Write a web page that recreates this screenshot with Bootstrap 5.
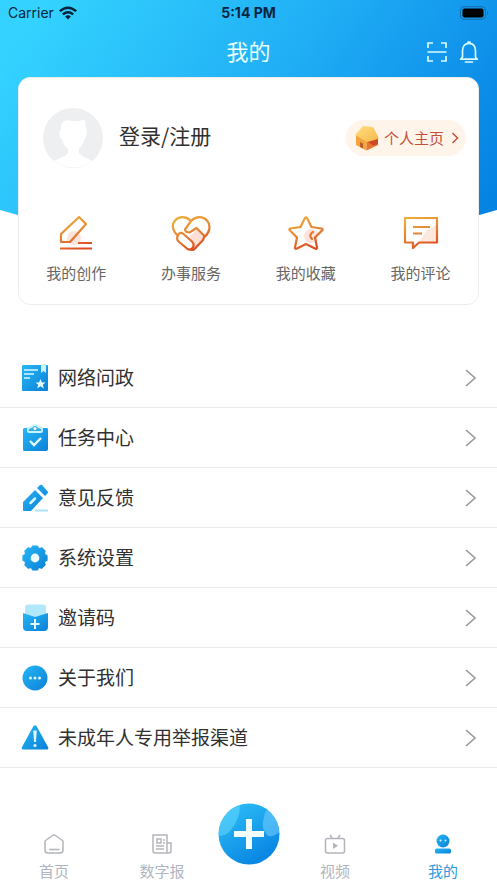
<!DOCTYPE html>
<html lang="zh-CN">
<head>
<meta charset="utf-8">
<meta name="viewport" content="width=device-width, initial-scale=1">
<title>我的</title>
<link href="https://cdn.jsdelivr.net/npm/bootstrap@5.3.0/dist/css/bootstrap.min.css" rel="stylesheet">
<style>
body{font-family:"Noto Sans CJK SC","Liberation Sans",sans-serif;background:#fff;color:#303030}
svg{display:block;flex:none}
.app{min-height:100vh}
.top-area{position:relative;isolation:isolate}
.top-area::before{content:"";position:absolute;z-index:-1;top:0;left:0;right:0;height:280px;
  background:linear-gradient(125deg,#34d3ff 6%,#20aef5 48%,#0a8ae7 82%,#007de0);
  clip-path:polygon(0 0,100% 0,100% 75%,50% 100%,0 75%)}
.status{height:26px;font:14px/26px Inter,sans-serif;color:#0a2540}
.status-side{flex:1 1 0}
.status strong{font-weight:700}
.title-row{height:51px;color:#eaffff}
.title-row h1{font-size:22px;line-height:46px;font-weight:400}
.title-side{flex:1 1 0}
.profile{margin:0 18px;height:228px;border:1px solid #ededef;border-radius:12px}
.who{height:120px;padding-right:12px}
.login{color:#303030;font-size:21px}
.home-pill{height:36px;background:#fff4ea;color:#c4523a;font-size:15px}
.shortcut{font-size:15px;line-height:22px;color:#666}
.menu{margin-top:43px}
.menu .list-group-item{height:60px;border-color:#ebebeb;border-width:0 0 1px;color:#303030;font-size:19px}
.menu.list-group-flush > .list-group-item:last-child{border-bottom-width:1px}
.tabs{color:#b0b5c0;font-size:15px;line-height:20px;padding-bottom:2px}
.tabs a{color:inherit;flex:1 1 0;gap:6px}
.tabs a.on{color:#2b9bdd}
.tabs .add{flex:0 0 65px;margin-bottom:16px}
</style>
<script src="https://cdn.jsdelivr.net/npm/bootstrap@5.3.0/dist/js/bootstrap.bundle.min.js"></script>
</head>
<body>
<svg width="0" height="0" class="position-absolute" aria-hidden="true">
  <defs>
    <linearGradient id="warm" gradientUnits="userSpaceOnUse" x1="8" y1="0" x2="22" y2="36"><stop stop-color="#f0b238"/><stop offset=".5" stop-color="#e68a35"/><stop offset="1" stop-color="#dc4d22"/></linearGradient>
    <linearGradient id="cool" x1="0" y1="0" x2="1" y2="1"><stop stop-color="#27b7f6"/><stop offset="1" stop-color="#0b80d6"/></linearGradient>
    <linearGradient id="ball" x1=".2" y1="0" x2=".8" y2="1"><stop stop-color="#2cbdf7"/><stop offset="1" stop-color="#0580e0"/></linearGradient>
    <linearGradient id="roof" x1="0" y1="0" x2="1" y2="1"><stop stop-color="#ffe07e"/><stop offset="1" stop-color="#f7b64a"/></linearGradient>
  </defs>
</svg>
<div class="app d-flex flex-column">
  <header class="top-area">
    <div class="status d-flex align-items-center px-2">
      <div class="status-side d-flex align-items-center gap-1">
        <span>Carrier</span>
        <svg width="20" height="14" viewBox="0 0 20 14" fill="none" stroke="#06223a" stroke-width="2.4"><path d="M1.8 5.2Q10-1.8 18.200 5.200M4.800 8.300Q10 4 15.200 8.300"/><path d="M7.200 10.500Q10 8.200 12.800 10.500L10 13.500Z" fill="#06223a" stroke="none"/></svg>
      </div>
      <strong>5:14 PM</strong>
      <div class="status-side d-flex justify-content-end">
        <svg width="30" height="14" viewBox="0 0 30 14"><rect x="1.500" y=".7" width="25" height="12.600" rx="3.500" fill="none" stroke="#176da8"/><rect x="3.500" y="2.600" width="21" height="8.800" rx="2" fill="#000"/><path d="M28 4.700q2 2.300 0 4.600z" fill="#176da8"/></svg>
      </div>
    </div>
    <div class="title-row d-flex align-items-center px-3">
      <div class="title-side"></div>
      <h1 class="m-0 pb-1">我的</h1>
      <div class="title-side d-flex justify-content-end gap-2">
        <button type="button" class="btn p-0 border-0" aria-label="扫一扫"><svg width="24" height="24" viewBox="0 0 24 24" fill="none" stroke="#d8fbff" stroke-width="1.700"><path d="M3 8V3H8M16 3H21V8M3 16V21H8M16 21H21V16M2.500 12H21.500"/></svg></button>
        <button type="button" class="btn p-0 border-0" aria-label="消息"><svg width="24" height="24" viewBox="0 0 24 24" fill="none" stroke="#d8fbff" stroke-width="1.700" stroke-linejoin="round" stroke-linecap="round"><path d="M5.500 17V11C5.500 6 8 3.300 12 3.300S18.500 6 18.500 11V17L20.300 19.200H3.700ZM11 3.200V2.200H13V3.200M8.500 22H15.500"/></svg></button>
      </div>
    </div>
    <section class="profile bg-white">
      <div class="who d-flex align-items-center">
        <svg class="ms-4" width="60" height="60" viewBox="0 0 60 60"><circle cx="30" cy="30" r="30" fill="#eeeff0"/><path d="M18 20C18 14 22 11.500 27 12.500Q35 14 42 11.500L43 21Q44 22 43.500 27Q43 29 42 31Q39 38 36 41V45Q38 48 43 50Q47 51.500 49 53Q41 59.500 30 59.500T11 53Q14 51 18 49.500Q25 47 25 44V41Q21 38 19 31Q16.500 31 16.500 26Q16.500 22 18 22Z" fill="#fff"/></svg>
        <a href="#" class="login text-decoration-none ms-3 pb-1">登录/注册</a>
        <a href="#" class="home-pill d-flex align-items-center rounded-pill text-decoration-none ms-auto pe-1">
          <svg class="ms-2" width="26" height="26" viewBox="0 0 26 26"><path d="M2 9.500L13 16L12.500 25.500L2 20Z" fill="#f3a43f"/><path d="M13 16L24 13.500V20L12.500 25.500Z" fill="#e67530"/><path d="M14 17L24 14V19L19 20.500Z" fill="#cc4822"/><path d="M9 1L18 2Q19.500 2 20 3.500L25 13.500L13 17L1 10Z" fill="url(#roof)"/><path d="M6 17L9 18.500V23.500L6 22Z" fill="#b96028"/></svg>
          <span class="ms-1">个人主页</span>
          <svg class="ms-1" width="14" height="14" viewBox="0 0 14 14" fill="none" stroke="#c4523a" stroke-width="1.500"><path d="M4.500 2L9.500 7L4.500 12"/></svg>
        </a>
      </div>
      <nav class="row g-0 text-center pt-3">
        <a href="#" class="col shortcut text-decoration-none d-flex flex-column align-items-center gap-2">
          <svg width="40" height="40" viewBox="0 0 40 40" fill="none" stroke="url(#warm)" stroke-width="2.200" stroke-linejoin="round"><circle cx="18" cy="24" r="7" fill="#fde3d9" stroke="none"/><path d="M5 20L23 3L30 10L14 28H5ZM22 29H36M4 34.500H36"/></svg>我的创作</a>
        <a href="#" class="col shortcut text-decoration-none d-flex flex-column align-items-center gap-2">
          <svg width="40" height="40" viewBox="0 0 40 40" fill="none" stroke="url(#warm)" stroke-width="2.200" stroke-linejoin="round" stroke-linecap="round"><path d="M19 22L27 15L34 23L23 35L21 28Z" fill="#fde0d5" stroke="none"/><path d="M7 21.500C2 18 0 11 4 6.500C8 2 15 2 20 7C25 2 32 2 36 6.500C40 11 39 18 34 22.500M20 7L14 15.500Q14 18 18.500 18.500L25.500 14L33.500 22L32 26L23.500 35Q22 36.500 20 35.500M7.500 20.500Q9.500 17.500 12.500 20L21 27.500Q24 31 21.500 34Q19.500 36.500 16.500 35L7 27Q5 24 7.500 20.500Z"/></svg>办事服务</a>
        <a href="#" class="col shortcut text-decoration-none d-flex flex-column align-items-center gap-2">
          <svg width="40" height="40" viewBox="0 0 40 40" fill="none" stroke="url(#warm)" stroke-width="2.200" stroke-linejoin="round"><circle cx="25" cy="22" r="7" fill="#fde3d9" stroke="none"/><path d="M19 4Q20 2.500 21 4L25.500 13L35.500 14.500Q37.500 15 36 16.500L29 23.500L31 33.500Q31 35.500 29 34.500L20 30L11 34.500Q9 35.500 9 33.500L11 23.500L4 16.500Q2.500 15 4.500 14.500L14.500 13ZM27 18Q22 21 26 25" stroke-linecap="round"/></svg>我的收藏</a>
        <a href="#" class="col shortcut text-decoration-none d-flex flex-column align-items-center gap-2">
          <svg width="40" height="40" viewBox="0 0 40 40" fill="none" stroke="url(#warm)" stroke-width="2.200" stroke-linejoin="round"><path d="M25 17L35 11V29H17Z" fill="#fde8dd" stroke="none"/><path d="M4 4H36V28.500H18L12 34V28.500H4ZM12 13H29M12 19.500H21"/></svg>我的评论</a>
      </nav>
    </section>
  </header>
  <main class="menu list-group list-group-flush">
    <a href="#" class="list-group-item d-flex align-items-center py-0"><svg class="ms-1 me-2" width="30" height="30" viewBox="0 0 30 30"><rect x="2" y="2" width="26" height="26" rx="1" fill="url(#cool)"/><path d="M21 1H26V10L23.500 8L21 10Z" fill="#cbf2ff"/><path d="M4 7H18M4 11H14M4 15H10" stroke="#d8f8ff" stroke-width="1.700"/><path d="M20.500 16L22 19.500H25.500L22.800 21.700L23.800 25.500L20.500 23.300L17.200 25.500L18.200 21.700L15.500 19.500H19Z" fill="#e7fcff"/></svg>网络问政<svg class="ms-auto" width="20" height="20" viewBox="0 0 20 20" fill="none" stroke="#999" stroke-width="1.600"><path d="M5 2L14 10L5 18"/></svg></a>
    <a href="#" class="list-group-item d-flex align-items-center py-0"><svg class="ms-1 me-2" width="30" height="30" viewBox="0 0 30 30"><path d="M4 5H27Q28 5 28 7V26Q28 28 26 28H4Q3 28 3 26V6Z" fill="url(#cool)"/><path d="M7 4L11 3Q15-1 19 3L23 4V8Q23 10 21 10H9Q7 10 7 8Z" fill="#c9f2ff"/><path d="M8.500 8Q9 5 12 5Q15 1 18 5Q21 5 21.500 8Z" fill="#39aee3"/><circle cx="15" cy="5.500" r="1.500" fill="#fff"/><path d="M10 18L14 22L21 15" fill="none" stroke="#e6fbff" stroke-width="2.400"/></svg>任务中心<svg class="ms-auto" width="20" height="20" viewBox="0 0 20 20" fill="none" stroke="#999" stroke-width="1.600"><path d="M5 2L14 10L5 18"/></svg></a>
    <a href="#" class="list-group-item d-flex align-items-center py-0"><svg class="ms-1 me-2" width="30" height="30" viewBox="0 0 30 30"><path d="M3 19L15 7L23 15L11 28H4Q3 28 3 27ZM17 5L20 2Q21 1.500 22 2L28 9Q28 10 27 11L25 13Z" fill="url(#cool)"/><path d="M10.500 20L15 15.500" stroke="#d7f7ff" stroke-width="2.500" stroke-linecap="round"/><path d="M15 27.500H28" stroke="#a9e3fb" stroke-width="2"/></svg>意见反馈<svg class="ms-auto" width="20" height="20" viewBox="0 0 20 20" fill="none" stroke="#999" stroke-width="1.600"><path d="M5 2L14 10L5 18"/></svg></a>
    <a href="#" class="list-group-item d-flex align-items-center py-0"><svg class="ms-1 me-2" width="30" height="30" viewBox="0 0 30 30"><path d="M26.800 12.700V17.300Q23.100 18.400 24.950 21.700L21.700 24.950Q18.400 23.100 17.300 26.800H12.700Q11.600 23.100 8.300 24.950L5.050 21.700Q6.900 18.400 3.200 17.300V12.700Q6.900 11.600 5.050 8.300L8.300 5.050Q11.600 6.900 12.700 3.200H17.300Q18.400 6.900 21.700 5.050L24.950 8.300Q23.100 11.600 26.800 12.700Z" fill="url(#cool)" stroke="url(#cool)" stroke-width="1.600" stroke-linejoin="round"/><circle cx="15" cy="15" r="4.400" fill="#eefcff"/></svg>系统设置<svg class="ms-auto" width="20" height="20" viewBox="0 0 20 20" fill="none" stroke="#999" stroke-width="1.600"><path d="M5 2L14 10L5 18"/></svg></a>
    <a href="#" class="list-group-item d-flex align-items-center py-0"><svg class="ms-1 me-2" width="30" height="30" viewBox="0 0 30 30"><rect x="5" y="1.500" width="21" height="13" rx="3" fill="#b2e8fc"/><path d="M3 10L15 14L28 10V24Q28 28 24 28H7Q3 28 3 24Z" fill="url(#cool)"/><path d="M15 16V26M10.500 21H19.500" stroke="#e2faff" stroke-width="2"/></svg>邀请码<svg class="ms-auto" width="20" height="20" viewBox="0 0 20 20" fill="none" stroke="#999" stroke-width="1.600"><path d="M5 2L14 10L5 18"/></svg></a>
    <a href="#" class="list-group-item d-flex align-items-center py-0"><svg class="ms-1 me-2" width="30" height="30" viewBox="0 0 30 30"><circle cx="15" cy="15" r="12.500" fill="url(#cool)"/><g fill="#dff8ff"><circle cx="10.500" cy="15" r="1.500"/><circle cx="15" cy="15" r="1.500"/><circle cx="19.500" cy="15" r="1.500"/></g></svg>关于我们<svg class="ms-auto" width="20" height="20" viewBox="0 0 20 20" fill="none" stroke="#999" stroke-width="1.600"><path d="M5 2L14 10L5 18"/></svg></a>
    <a href="#" class="list-group-item d-flex align-items-center py-0"><svg class="ms-1 me-2" width="30" height="30" viewBox="0 0 30 30"><path d="M13.500 3Q15 1.500 16.500 3L28 24Q29 26.500 27 26.500H3Q1 26.500 2 24Z" fill="url(#cool)"/><path d="M13.300 7.500H16.700L16 19H14Z" fill="#e2f8ff"/><circle cx="15" cy="22.500" r="1.600" fill="#e2f8ff"/></svg>未成年人专用举报渠道<svg class="ms-auto" width="20" height="20" viewBox="0 0 20 20" fill="none" stroke="#999" stroke-width="1.600"><path d="M5 2L14 10L5 18"/></svg></a>
  </main>
  <nav class="tabs d-flex align-items-end mt-auto">
    <a href="#" class="d-flex flex-column align-items-center text-decoration-none"><svg width="22" height="22" viewBox="0 0 22 22" fill="none" stroke="#b2b5bb" stroke-width="1.500" stroke-linejoin="round"><path d="M2 8L9.500 2.500Q11 1.500 12.500 2.500L20 8V17Q20 20 17 20H5Q2 20 2 17ZM6 16.500H16.500"/></svg>首页</a>
    <a href="#" class="d-flex flex-column align-items-center text-decoration-none"><svg width="22" height="22" viewBox="0 0 22 22" fill="none" stroke="#b2b5bb" stroke-width="1.500"><path d="M16 20H4Q2 20 2 18V2H16ZM16 10H20V18Q20 20 18 20H16M6 6H10V10H6ZM12 7H14M12 10H14M5 13H13M5 16H13"/></svg>数字报</a>
    <div class="add d-flex justify-content-center"><button type="button" class="btn p-0 border-0 rounded-circle" aria-label="发布"><svg width="62" height="62" viewBox="0 0 62 62"><circle cx="31" cy="31" r="30.500" fill="url(#ball)"/><path d="M.6 33A30.500 30.500 0 0 1 22 2Q22 16 13 27Q8 33 .6 33Z" fill="#6bdcff" opacity=".5"/><path d="M49 6.300A30.500 30.500 0 0 1 61.400 29Q56 34 50 33Q42 26 46 14Q47 9 49 6.300Z" fill="#80d5ff" opacity=".5"/><path d="M31 16V46M16 31H46" stroke="#f2fdff" stroke-width="6"/></svg></button></div>
    <a href="#" class="d-flex flex-column align-items-center text-decoration-none"><svg width="22" height="22" viewBox="0 0 22 22" fill="none" stroke="#b2b5bb" stroke-width="1.500"><rect x="1.500" y="5.500" width="19" height="14.500" rx="2"/><path d="M6 2L8 5M16 2L14 5"/><path d="M9 9.500L14 12.700L9 16Z" fill="#b2b5bb" stroke="none"/></svg>视频</a>
    <a href="#" class="on d-flex flex-column align-items-center text-decoration-none" aria-current="page"><svg width="22" height="22" viewBox="0 0 22 22" fill="url(#cool)"><circle cx="11" cy="8" r="6.500"/><rect x="3" y="15.500" width="16" height="5" rx="1.500"/><circle cx="8.500" cy="7.500" r=".9" fill="#e5faff"/><circle cx="13.500" cy="7.500" r=".9" fill="#e5faff"/></svg>我的</a>
  </nav>
</div>
</body>
</html>
